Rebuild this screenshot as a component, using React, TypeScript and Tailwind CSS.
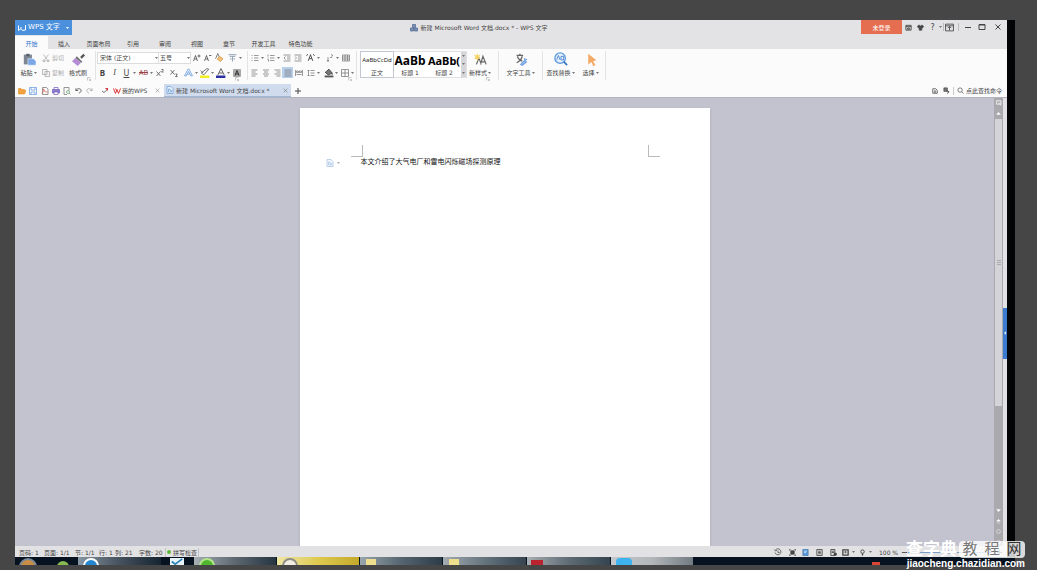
import React from "react";

type IconProps = { children: React.ReactNode; className?: string };

const Icon = ({ children, className = "h-2 w-2" }: IconProps) => (
  <svg viewBox="0 0 16 16" fill="none" stroke="currentColor" strokeWidth="1.5" className={`shrink-0 ${className}`} aria-hidden="true">
    {children}
  </svg>
);

const Caret = () => (
  <span className="flex w-[5px] shrink-0 justify-center">
    <svg viewBox="0 0 6 4" className="h-[2px] w-[3px]" aria-hidden="true">
      <path d="M0 0h6L3 4z" fill="#777" />
    </svg>
  </span>
);

type ToolProps = { label: string; caret?: boolean; active?: boolean; className?: string; children: React.ReactNode };

const Tool = ({ label, caret, active, className = "", children }: ToolProps) => (
  <button aria-label={label} className={`flex h-[13px] shrink-0 items-center ${className}`}>
    <span className={`flex h-[11px] w-[11px] items-center justify-center ${active ? "bg-[#b9d0ec]" : ""}`}>{children}</span>
    {caret && <Caret />}
  </button>
);

type BigToolProps = { label: string; caret?: boolean; className: string; children: React.ReactNode };

const BigTool = ({ label, caret, className, children }: BigToolProps) => (
  <button className={`flex shrink-0 flex-col items-center ${className}`}>
    <span className="flex h-4 items-center">{children}</span>
    <span className="flex h-[11px] items-center whitespace-nowrap">
      {label}
      {caret && <Caret />}
    </span>
  </button>
);

const Launcher = () => (
  <button aria-label="更多" className="absolute -bottom-px right-1 text-[#999]">
    <Icon className="h-1 w-1">
      <path d="M2 14V2h12M7 7l7 7M14 8v6H8" strokeWidth="2" />
    </Icon>
  </button>
);

const PageIcon = ({ className }: { className?: string }) => (
  <Icon className={className}>
    <path d="M2 1h8l4 4v10H2z" fill="#eaf2fc" stroke="#6f9fd8" />
    <path d="M5 12V6h3v3h3v3z" stroke="#6f9fd8" />
  </Icon>
);

const TitleBar = () => (
  <header className="flex h-[15px] items-start justify-between">
    <button className="flex h-[15px] w-[57px] items-center bg-[#4a90dd] pl-[3px] text-[7px] text-white">
      <Icon className="mr-[2px] h-2 w-2">
        <path d="M1 3v10l5-4 3 4 6-1V2M6 9V6" strokeWidth="2" />
      </Icon>
      WPS 文字
      <svg viewBox="0 0 6 4" className="ml-auto mr-[3px] h-[2px] w-[3px]" aria-hidden="true">
        <path d="M0 0h6L3 4z" fill="#fff" />
      </svg>
    </button>
    <h1 className="flex h-[15px] items-center gap-[3px] pl-6">
      <Icon>
        <path d="M5 1h6v6H5zM1 8h6v6H1zM9 8h6v6H9z" fill="#7b93bd" stroke="#53688f" />
      </Icon>
      新建 Microsoft Word 文档.docx * - WPS 文字
    </h1>
    <div className="flex h-[14px] items-center text-[#444]">
      <button className="mr-px h-[14px] w-[41px] bg-[#e66e50] text-white">未登录</button>
      <Tool label="消息">
        <Icon className="h-[7px] w-[7px]"><path d="M2 3h12v11H2zM2 6h12M6 9h4v3H6z" strokeWidth="2" /></Icon>
      </Tool>
      <Tool label="皮肤" className="ml-px">
        <Icon className="h-[7px] w-[7px]"><path d="M5 2 1 5l2 4 2-1v6h6V8l2 1 2-4-4-3-3 3z" fill="currentColor" /></Icon>
      </Tool>
      <Tool label="帮助" caret className="ml-px">
        <span className="text-[8px]">?</span>
      </Tool>
      <span className="h-2 w-px bg-[#bbb]" />
      <Tool label="隐藏功能区">
        <Icon className="h-[9px] w-[9px]"><path d="M1 2h14v12H1zM1 5h14M8 13V7M5 9l3-3 3 3" /></Icon>
      </Tool>
      <span className="mx-[3px] h-2 w-px bg-[#bbb]" />
      <Tool label="最小化">
        <Icon><path d="M2 9h12" strokeWidth="2" /></Icon>
      </Tool>
      <Tool label="最大化" className="ml-[3px]">
        <Icon><path d="M2 3h12v10H2zM2 4h12" strokeWidth="2" /></Icon>
      </Tool>
      <Tool label="关闭" className="ml-[5px] mr-1">
        <Icon><path d="m3 3 10 10M13 3 3 13" strokeWidth="2" /></Icon>
      </Tool>
    </div>
  </header>
);

const menus = ["插入", "页面布局", "引用", "审阅", "视图", "章节", "开发工具", "特色功能"];

const MenuTabs = () => (
  <nav className="flex h-[14px] items-end">
    <button className="h-[13px] w-[33px] bg-[#fbfbfc] pt-px text-[#2f78cc]">开始</button>
    {menus.map((name) => (
      <button key={name} className={`h-[13px] pt-px ${name.length > 2 ? "w-[37px]" : "w-8"}`}>
        {name}
      </button>
    ))}
  </nav>
);

const Clipboard = () => (
  <div className="relative flex w-[75px] shrink-0">
    <BigTool label="粘贴" caret className="mr-1 w-[18px]">
      <Icon className="h-[13px] w-[13px]">
        <path d="M1 2h10v12H1z" fill="#7d8794" stroke="none" />
        <path d="M4 1h4v3H4z" fill="#555f6c" stroke="none" />
        <path d="M6 7h7l3 3v5H6z" fill="#7aa7e6" stroke="#fff" strokeWidth=".6" />
      </Icon>
    </BigTool>
    <div className="flex w-6 flex-col gap-[2px] text-[#aaa]">
      <button className="flex h-[13px] items-center gap-[2px] whitespace-nowrap">
        <Icon><path d="m3 1 7 10M13 1 6 11M2 12h4v3H2zM10 12h4v3h-4z" /></Icon>
        剪切
      </button>
      <button className="flex h-[13px] items-center gap-[2px] whitespace-nowrap">
        <Icon><path d="M1 1h9v10H1zM6 5h9v10H6z" fill="#f4f4f4" /></Icon>
        复制
      </button>
    </div>
    <BigTool label="格式刷" className="w-6">
      <Icon className="h-[13px] w-[13px]">
        <path d="m10 5 4-4 2 2-4 4z" fill="#555" stroke="none" />
        <path d="m6 4 7 7-2 1-7-6z" fill="#777" stroke="none" />
        <path d="m4 6 7 6-4 4-7-6z" fill="#b58bd6" stroke="none" />
      </Icon>
    </BigTool>
    <Launcher />
  </div>
);

const FontGroup = () => (
  <div className="relative flex w-[148px] shrink-0 flex-col gap-[2px] border-l border-[#e4e4e6] pl-px">
    <div className="flex h-[13px] items-center">
      <div className="relative">
        <select aria-label="字体" className="block h-3 w-[62px] appearance-none border border-[#dcdcdf] bg-white pl-[2px]">
          <option>宋体 (正文)</option>
        </select>
        <span className="pointer-events-none absolute right-0 top-[5px] flex"><Caret /></span>
      </div>
      <div className="relative">
        <select aria-label="字号" className="block h-3 w-8 appearance-none border border-l-0 border-[#dcdcdf] bg-white pl-px">
          <option>五号</option>
        </select>
        <span className="pointer-events-none absolute right-0 top-[5px] flex"><Caret /></span>
      </div>
      <Tool label="增大字号">
        <Icon><path d="m1 14 4-11 4 11M3 10h5M12 1v6M9 4h6" /></Icon>
      </Tool>
      <Tool label="减小字号">
        <Icon><path d="m1 14 4-11 4 11M3 10h5M10 3h5" /></Icon>
      </Tool>
      <Tool label="清除格式" className="ml-px">
        <Icon className="h-[9px] w-[9px]">
          <path d="m1 10 4-9 3 7" stroke="#666" />
          <path d="m8 6 6 4-4 5-6-4z" fill="#f0c27a" stroke="#d69a4a" />
        </Icon>
      </Tool>
      <Tool label="拼音指南" caret className="ml-[2px]">
        <Icon className="h-[9px] w-[9px]"><path d="M1 3h14M3 6h10M8 6v9M5 9v3M11 9v3" stroke="#8492a8" /></Icon>
      </Tool>
    </div>
    <div className="flex h-[13px] items-center font-['Noto_Sans',sans-serif] text-[8px]">
      <Tool label="加粗"><b>B</b></Tool>
      <Tool label="倾斜" className="ml-px"><i className="font-['Liberation_Serif',serif]">I</i></Tool>
      <Tool label="下划线" caret className="ml-px"><u>U</u></Tool>
      <Tool label="删除线" caret className="ml-px"><s className="text-[7px] text-[#944]">AB</s></Tool>
      <Tool label="上标">
        <Icon><path d="m1 5 8 9M9 5l-8 9M11 1h3v2l-3 3h4" /></Icon>
      </Tool>
      <Tool label="下标" className="ml-[3px]">
        <Icon><path d="m1 2 8 9M9 2l-8 9M11 10h3v2l-3 3h4" /></Icon>
      </Tool>
      <Tool label="文字效果" caret className="ml-1">
        <Icon className="h-[9px] w-[9px]"><path d="M1 14 7 2h2l6 12h-3l-4-8-4 8zM6 11h4" stroke="#6c9fdf" /></Icon>
      </Tool>
      <Tool label="突出显示" caret>
        <Icon className="h-[10px] w-[10px]">
          <path d="m2 8 4 3 8-9-3-1zM1 4l4 4" stroke="#666" />
          <path d="M0 12h15v4H0z" fill="#f3ee20" stroke="none" />
        </Icon>
      </Tool>
      <Tool label="字体颜色" caret>
        <Icon className="h-[10px] w-[10px]">
          <path d="m3 11 5-10 5 10M5 8h6" stroke="#555" />
          <path d="M0 12h15v4H0z" fill="#2a30a0" stroke="none" />
        </Icon>
      </Tool>
      <Tool label="字符底纹">
        <Icon>
          <path d="M1 1h14v14H1z" fill="#aaa" stroke="#999" />
          <path d="m4 13 4-10 4 10M6 10h5" stroke="#333" strokeWidth="2" />
        </Icon>
      </Tool>
    </div>
    <Launcher />
  </div>
);

const ParagraphGroup = () => (
  <div className="relative ml-1 flex w-[109px] shrink-0 flex-col gap-[2px] border-l border-[#e4e4e6] pl-px text-[#777]">
    <div className="flex h-[13px] items-center">
      <Tool label="项目符号" caret>
        <Icon><path d="M1 3h2M1 8h2M1 13h2M6 3h9M6 8h9M6 13h9" /></Icon>
      </Tool>
      <Tool label="编号" caret>
        <Icon><path d="M2 1v4M1 8h2M1 11h2v4M6 3h9M6 8h9M6 13h9" /></Icon>
      </Tool>
      <Tool label="减少缩进">
        <Icon><path d="M1 2h14M8 6h7M8 10h7M1 14h14M5 5 2 8l3 3" /></Icon>
      </Tool>
      <Tool label="增加缩进">
        <Icon><path d="M1 2h14M8 6h7M8 10h7M1 14h14M2 5l3 3-3 3" /></Icon>
      </Tool>
      <Tool label="中文版式" caret className="ml-[2px]">
        <Icon className="h-[9px] w-[9px]"><path d="m4 14 4-11 4 11M6 10h4M1 5l2-3M15 5l-2-3" stroke="#333" /></Icon>
      </Tool>
      <Tool label="排序" caret className="ml-[3px]">
        <Icon><path d="M4 15V6M2 12l2 3 2-3M8 7h4M10 1l4 2-3 2" /></Icon>
      </Tool>
      <Tool label="制表位">
        <Icon><path d="M1 2h14v12H1zM1 6h14M1 10h14M6 2v12M11 2v12" /></Icon>
      </Tool>
    </div>
    <div className="flex h-[13px] items-center">
      <Tool label="左对齐"><Icon><path d="M1 2h12M1 6h8M1 10h12M1 14h8" /></Icon></Tool>
      <Tool label="居中"><Icon><path d="M2 2h12M4 6h8M2 10h12M4 14h8" /></Icon></Tool>
      <Tool label="右对齐"><Icon><path d="M3 2h12M7 6h8M3 10h12M7 14h8" /></Icon></Tool>
      <Tool label="两端对齐" active><Icon><path d="M1 2h14M1 6h14M1 10h14M1 14h14" /></Icon></Tool>
      <Tool label="分散对齐"><Icon><path d="M1 2v12M15 2v12M3 4h4v3H3zM9 4h4v3H9zM3 11h10" /></Icon></Tool>
      <Tool label="行距" caret className="ml-px">
        <Icon><path d="M3 2v12M1 4l2-2 2 2M1 12l2 2 2-2M7 3h8M7 8h8M7 13h8" /></Icon>
      </Tool>
      <Tool label="底纹" caret className="ml-[2px]">
        <Icon className="h-[10px] w-[10px]">
          <path d="m2 7 6-5 5 6-6 3zM13 8v3" fill="#777" stroke="#444" />
          <path d="M1 12h14v3H1z" fill="#555" stroke="none" />
        </Icon>
      </Tool>
      <Tool label="边框" caret>
        <Icon><path d="M1 1h14v14H1zM8 1v14M1 8h14" /></Icon>
      </Tool>
    </div>
    <Launcher />
  </div>
);

const StylesGroup = () => (
  <div className="relative flex w-[138px] shrink-0 border-l border-[#e4e4e6] pl-[3px]">
    <div className="flex h-[27px] w-[108px] border border-[#e0e0e3] bg-white">
      <button className="flex w-8 shrink-0 flex-col items-center outline outline-[#c3c7d2]">
        <span className="flex h-4 items-center whitespace-nowrap font-['Noto_Sans',sans-serif] text-[#222]">AaBbCcDd</span>
        <span className="flex h-[9px] items-center">正文</span>
      </button>
      <button className="flex w-[34px] shrink-0 flex-col items-center">
        <span className="flex h-4 items-center font-['Noto_Sans',sans-serif] text-[12px] font-bold text-black">AaBb</span>
        <span className="flex h-[9px] items-center">标题 1</span>
      </button>
      <button className="flex w-[34px] shrink-0 flex-col items-center">
        <span className="flex h-4 items-center font-['Noto_Sans',sans-serif] text-[11px] font-bold text-black">AaBb(</span>
        <span className="flex h-[9px] items-center">标题 2</span>
      </button>
      <div className="flex flex-1 flex-col justify-around bg-[#d6d6da]">
        <button aria-label="上一行" className="flex justify-center"><Caret /></button>
        <button aria-label="下一行" className="flex justify-center"><Caret /></button>
        <button aria-label="展开样式" className="flex justify-center"><Caret /></button>
      </div>
    </div>
    <BigTool label="新样式" caret className="w-[27px]">
      <Icon className="h-[13px] w-[13px]">
        <path d="m3 14 3-8 3 8M8 14l3-10 4 10M9 11h5" stroke="#666" />
        <path d="m4 0 1 3 3-1-2 3 2 2-3 0-1 3-1-3-3 0 2-2-2-3 3 1z" fill="#f5d35e" stroke="none" />
      </Icon>
    </BigTool>
    <Launcher />
  </div>
);

const Ribbon = () => (
  <section className="flex h-[35px] bg-[#fbfbfc] pb-1 pl-[5px] pt-[2px]">
    <Clipboard />
    <FontGroup />
    <ParagraphGroup />
    <StylesGroup />
    <div className="ml-1 flex w-11 shrink-0 border-l border-[#e4e4e6] pl-[3px]">
      <BigTool label="文字工具" caret className="w-[38px]">
        <Icon className="h-[13px] w-[13px]">
          <path d="M2 3h8M6 1v2M3 4c1 4 3 5 6 6M9 4c-1 4-3 6-7 8" stroke="#666" />
          <path d="m7 14 5-5 2 2-5 4zM12 6v3M15 8h-2" fill="#aac8f0" stroke="#6f9fe0" />
        </Icon>
      </BigTool>
    </div>
    <div className="flex w-16 shrink-0 border-x border-[#e4e4e6]">
      <BigTool label="查找替换" caret className="w-[36px]">
        <Icon className="h-[14px] w-[14px]">
          <circle cx="7" cy="7" r="6" stroke="#5d9ae0" fill="#e5f0fc" />
          <path d="m11 11 4 4" stroke="#3c79c4" strokeWidth="2" />
          <path d="m3 9 2-5 2 5M8 5h3v4H8z" stroke="#4784cf" strokeWidth="1" />
        </Icon>
      </BigTool>
      <BigTool label="选择" caret className="w-[24px]">
        <Icon className="h-[13px] w-[13px]">
          <path d="m4 1 10 8-4 1 3 5-3 1-2-5-4 3z" fill="#f2aa66" stroke="none" />
        </Icon>
      </BigTool>
    </div>
  </section>
);

const DocumentBar = () => (
  <div className="flex h-[13px] items-center bg-[#fbfbfc]">
    <Tool label="打开" className="ml-px">
      <Icon><path d="M1 3h5l2 2h5v2h3l-3 7H1z" fill="#f2a23c" stroke="#dd8419" strokeWidth="1" /></Icon>
    </Tool>
    <Tool label="保存">
      <Icon><path d="M1 1h14v14H1zM4 1v5h8V1M4 15v-5h8v5" stroke="#6a9fe0" /></Icon>
    </Tool>
    <Tool label="输出为PDF" className="ml-px">
      <Icon>
        <path d="M3 1h8l3 3v11H3z" stroke="#777" />
        <path d="M1 12c6-1 6-8 4-8s2 7 8 6" stroke="#d35843" />
      </Icon>
    </Tool>
    <Tool label="打印">
      <Icon>
        <path d="M1 5h14v7H1z" fill="#8c7bd0" stroke="#7563bd" />
        <path d="M4 1h8v4H4zM4 10h8v5H4z" fill="#fff" stroke="#7563bd" />
      </Icon>
    </Tool>
    <Tool label="打印预览">
      <Icon><path d="M8 15H2V1h10v6" stroke="#777" /><circle cx="10" cy="10" r="3" stroke="#6d9d6d" /><path d="m12 12 3 3" stroke="#6d9d6d" /></Icon>
    </Tool>
    <Tool label="撤销" className="ml-px">
      <Icon className="h-[7px] w-[7px]"><path d="M2 3v5h5M2 8c4-6 12-5 12 0 0 3-2 5-5 6" stroke="#555" strokeWidth="2" /></Icon>
    </Tool>
    <Tool label="恢复">
      <Icon className="h-[7px] w-[7px]"><path d="M14 3v5H9M14 8C10 2 2 3 2 8c0 3 2 5 5 6" stroke="#999" /></Icon>
    </Tool>
    <Tool label="快速访问" className="ml-1 mr-[2px]">
      <Icon><path d="m2 8 4 3 8-7" stroke="#777" strokeWidth="2" /><path d="M8 2h6v6z" fill="#d8303c" stroke="none" /></Icon>
    </Tool>
    <div className="flex h-[13px] w-[52px] items-center pl-px">
      <Icon className="mr-px h-2 w-2">
        <path d="m1 3 4 10 3-8 3 8 4-10M5 3l3 6" stroke="#dc3b3b" strokeWidth="2" />
      </Icon>
      <a href="#" className="whitespace-nowrap">我的WPS</a>
      <button aria-label="关闭我的WPS" className="ml-auto mr-1 text-[#888]">
        <Icon className="h-[5px] w-[5px]"><path d="m2 2 12 12M14 2 2 14" strokeWidth="2" /></Icon>
      </button>
    </div>
    <div className="flex h-[13px] w-[127px] items-center border-b border-[#9db8dd] bg-[#d0dcee] pl-[2px]">
      <PageIcon className="mr-[2px] h-2 w-2" />
      <a href="#" className="whitespace-nowrap">新建 Microsoft Word 文档.docx *</a>
      <button aria-label="关闭文档" className="ml-auto mr-[3px] text-[#777]">
        <Icon className="h-[5px] w-[5px]"><path d="m2 2 12 12M14 2 2 14" strokeWidth="2" /></Icon>
      </button>
    </div>
    <Tool label="新建" className="ml-px">
      <Icon><path d="M8 2v12M2 8h12" strokeWidth="2" /></Icon>
    </Tool>
    <div className="ml-auto flex items-center">
      <Tool label="反馈">
        <Icon className="h-[6px] w-[6px]"><path d="M2 2h8l4 4v8H2zM5 8h6M5 11h6" strokeWidth="2" /></Icon>
      </Tool>
      <Tool label="共享" className="ml-px">
        <Icon className="h-[7px] w-[7px]"><path d="M2 2h8v8H2z" fill="#777" /><path d="m8 8 6 3-5 4" strokeWidth="2" /></Icon>
      </Tool>
      <span className="mx-px h-2 w-px bg-[#ccc]" />
      <label htmlFor="command" aria-label="查找命令" className="flex w-[11px] justify-center">
        <Icon className="h-[7px] w-[7px]"><circle cx="7" cy="7" r="5" /><path d="m11 11 4 4" /></Icon>
      </label>
      <input id="command" placeholder="点此查找命令" className="h-[11px] w-[41px] bg-transparent outline-none placeholder:text-[#444]" />
    </div>
  </div>
);

const Workspace = () => (
  <main className="flex min-h-0 flex-1 border-t border-[#b3b3bd] bg-[#c3c3cf]">
    <div className="flex min-w-0 flex-1 justify-center pt-[10px]">
      <article className="w-[410px] bg-white px-[26px] pt-[37px] shadow">
        <div className="flex justify-between pl-[25px] pr-6">
          <span className="h-3 w-3 border-b border-r border-[#bbb]" />
          <span className="h-3 w-3 border-b border-l border-[#bbb]" />
        </div>
        <div className="flex h-[11px] items-center">
          <button aria-label="文档选项" className="flex w-[35px] items-center gap-[2px] opacity-60">
            <PageIcon className="h-2 w-2" />
            <Caret />
          </button>
          <p className="text-[7px] text-[#111]">本文介绍了大气电厂和雷电闪烁磁场探测原理</p>
        </div>
      </article>
    </div>
    <div className="flex w-[9px] flex-col items-center bg-[#aaaaae] text-white">
      <button aria-label="显示标尺" className="flex h-[10px] items-center">
        <Icon className="h-[6px] w-[6px]"><path d="M1 2h12v9H1zM6 7l8 7" strokeWidth="2" /></Icon>
      </button>
      <button aria-label="向上滚动" className="flex h-[11px] items-center">
        <Icon className="h-[5px] w-[5px]"><path d="m2 11 6-7 6 7z" fill="currentColor" /></Icon>
      </button>
      <div className="flex min-h-0 w-full flex-1 flex-col">
        <div className="mx-px flex h-3/4 flex-col items-center justify-center gap-px bg-[#d4d4d8]">
          <span className="h-px w-1 bg-[#aaa]" />
          <span className="h-px w-1 bg-[#aaa]" />
          <span className="h-px w-1 bg-[#aaa]" />
        </div>
      </div>
      <div className="flex h-11 flex-col items-center justify-between pb-px pt-[6px]">
        <button aria-label="向下滚动"><Icon className="block h-[5px] w-[5px]"><path d="m2 5 6 7 6-7z" fill="currentColor" /></Icon></button>
        <button aria-label="上一页"><Icon className="block h-[5px] w-[5px]"><path d="m2 7 6-6 6 6zM3 13h10" fill="currentColor" /></Icon></button>
        <button aria-label="选择浏览对象"><Icon className="block h-[5px] w-[5px]"><circle cx="8" cy="8" r="6" /></Icon></button>
        <button aria-label="下一页"><Icon className="block h-[5px] w-[5px]"><path d="m2 9 6 6 6-6zM3 3h10" fill="currentColor" /></Icon></button>
      </div>
    </div>
    <div className="flex w-1 flex-col justify-center bg-[#e2e2e6] pt-[22px]">
      <button aria-label="展开任务窗格" className="flex h-[51px] items-center bg-[#3c7bcd] text-white">
        <Icon className="h-1 w-1"><path d="m11 3-6 5 6 5z" fill="currentColor" /></Icon>
      </button>
    </div>
  </main>
);

const StatusBar = () => (
  <footer className="flex h-[11px] items-center bg-[#e2e2e4] pl-1 pt-px">
    <span className="w-[25px]">页码: 1</span>
    <span className="w-[31px]">页面: 1/1</span>
    <span className="w-6">节: 1/1</span>
    <span className="w-4">行: 1</span>
    <span className="w-6">列: 21</span>
    <span className="w-[26px]">字数: 20</span>
    <button className="flex items-center gap-[2px] border-x border-[#c5c5c8] px-px">
      <span className="h-1 w-1 rounded-full bg-[#5db53c]" />
      拼写检查
    </button>
    <div className="ml-auto flex items-center">
      <Tool label="历史版本">
        <Icon><path d="M3 4a6 6 0 1 1-1 5M1 3l2 3 3-1M8 5v4h3" /></Icon>
      </Tool>
      <Tool label="全屏显示" className="ml-1">
        <Icon className="h-[7px] w-[7px]"><path d="M1 4V1h3M12 1h3v3M15 12v3h-3M4 15H1v-3" /><path d="M4 4h8v8H4z" fill="currentColor" /></Icon>
      </Tool>
      <Tool label="页面视图" className="ml-[2px]">
        <Icon className="h-[7px] w-[7px]"><path d="M2 1h12v14H2z" fill="#5b9bdc" stroke="#376fa7" /><path d="M5 5h6M5 8h4" stroke="#fff" /></Icon>
      </Tool>
      <Tool label="大纲视图" className="ml-[3px]">
        <Icon className="h-[7px] w-[7px]"><path d="M2 1h12v14H2zM5 5h6M5 8h6M5 11h6" strokeWidth="2" /></Icon>
      </Tool>
      <Tool label="Web版式" className="ml-[3px]">
        <Icon className="h-[7px] w-[7px]"><path d="M2 1h9v14H2zM4 5h5M4 8h5" strokeWidth="2" /><circle cx="12" cy="12" r="3" fill="currentColor" /></Icon>
      </Tool>
      <Tool label="护眼模式" caret className="ml-px">
        <Icon className="h-[7px] w-[7px]"><path d="M2 2h12v12H2z" strokeWidth="3" /><path d="M8 4v6M5 7h6" /></Icon>
      </Tool>
      <Tool label="定位" caret className="ml-px">
        <Icon className="h-[7px] w-[7px]"><circle cx="8" cy="6" r="4" strokeWidth="2" /><path d="M8 10v5" strokeWidth="3" /></Icon>
      </Tool>
      <button className="ml-[6px] w-[22px] whitespace-nowrap text-left">100 %</button>
      <button aria-label="缩小" className="flex w-[7px]"><Icon className="h-[7px] w-[7px]"><path d="M2 8h12" strokeWidth="2" /></Icon></button>
      <input
        aria-label="显示比例"
        type="range"
        className="h-px w-[84px] appearance-none bg-[#7c9cc8] [&::-webkit-slider-thumb]:h-1 [&::-webkit-slider-thumb]:w-1 [&::-webkit-slider-thumb]:appearance-none [&::-webkit-slider-thumb]:bg-[#9aa9bd]"
      />
      <button aria-label="放大" className="mx-1 flex w-[7px]"><Icon className="h-[7px] w-[7px]"><path d="M2 8h12M8 2v12" strokeWidth="2" /></Icon></button>
    </div>
  </footer>
);

// each button carries its own icon, cut off by the bottom of the bar
const Taskbar = () => (
  <div className="flex h-2 gap-px overflow-hidden bg-[#06121f]">
    <button aria-label="开始菜单" className="w-[33px] pl-1 pt-px">
      <span className="block h-[18px] w-[18px] rounded-full border-2 border-[#77879a] bg-[#c98e45]" />
    </button>
    <button aria-label="浏览器" className="w-[28px] pl-2 pt-1">
      <span className="block h-3 w-3 rounded-full bg-[#87b950]" />
    </button>
    <button aria-label="QQ浏览器" className="w-[83px] bg-linear-to-r from-[#8797a4] via-[#46525d] to-[#172532] pl-[5px] pt-px">
      <span className="block h-4 w-4 rounded-full border-2 border-white bg-[#2386cf]" />
    </button>
    <button aria-label="图表" className="w-[31px] pl-[7px] pt-px">
      <svg viewBox="0 0 16 8" className="h-[7px] w-4" aria-hidden="true">
        <path d="M0 0h16v8H0z" fill="#e8f4fb" />
        <path d="m2 4 4 3 8-6" stroke="#2b82b5" strokeWidth="2" fill="none" />
      </svg>
    </button>
    <button aria-label="安全卫士" className="w-[82px] bg-linear-to-r from-[#a7afb4] via-[#5d6871] to-[#263541] pl-[5px] pt-px">
      <span className="block h-4 w-4 rounded-full border-2 border-[#b3e58c] bg-[#4fb62e]" />
    </button>
    <button aria-label="搜狗" className="w-[82px] bg-linear-to-r from-[#efe6a4] via-[#ddca4e] to-[#c4a92b] pl-[5px] pt-px">
      <span className="block h-4 w-4 rounded-full border-2 border-[#8e8e88] bg-[#f1eee1]" />
    </button>
    <button aria-label="文件夹" className="w-[82px] bg-linear-to-r from-[#9aa6ad] via-[#566570] to-[#2d3d48] pl-[6px] pt-[2px]">
      <span className="block h-3 w-[10px] bg-[#eedf8e]" />
    </button>
    <button aria-label="文档文件夹" className="w-[83px] bg-linear-to-r from-[#a3acb1] via-[#66747e] to-[#35444f] pl-[6px] pt-[2px]">
      <span className="block h-3 w-[10px] bg-[#eedf8e]" />
    </button>
    <button aria-label="PDF" className="w-[83px] bg-linear-to-r from-[#a9afb2] via-[#5f6c75] to-[#35444f] pl-1 pt-[3px]">
      <span className="block h-3 w-3 bg-[#b8232d]" />
    </button>
    <button aria-label="聊天" className="w-[82px] bg-linear-to-r from-[#c4c8ca] via-[#b3b7b9] to-[#727b82] pl-[5px] pt-px">
      <span className="block h-4 w-4 rounded bg-[#3fb3ef]" />
    </button>
    <span className="ml-auto mr-[135px] mt-[5px] h-1 w-2 bg-[#dc4436]" />
  </div>
);

const Watermark = () => (
  <div className="pointer-events-none absolute bottom-px right-3 w-[119px] text-white">
    <div className="flex h-[18px] items-center justify-between">
      <span className="text-[17px] leading-[18px] font-bold">查字典</span>
      <span className="flex h-[17px] w-[66px] items-center justify-around rounded-sm bg-white/80 text-[15px] leading-[17px] text-[#777]">
        <span>教</span>
        <span>程</span>
        <span className="text-[#333]">网</span>
      </span>
    </div>
    <div className="h-[11px] whitespace-nowrap text-right font-['Liberation_Sans'] text-[10px] leading-[11px] font-bold">jiaocheng.chazidian.com</div>
  </div>
);

const App = () => {
  return (
    <div className="relative flex h-screen flex-col overflow-hidden bg-[#464646] pb-[5px] pl-[15px] pr-[22px] pt-5 font-['DejaVu_Sans','Noto_Sans_CJK_SC',sans-serif] text-[6px] leading-[9px] text-[#444]">
      <div className="flex min-h-0 flex-1 bg-[#020406]">
        <div className="flex min-w-0 flex-1 flex-col bg-[#e3e3e5]">
          <TitleBar />
          <MenuTabs />
          <Ribbon />
          <DocumentBar />
          <Workspace />
          <StatusBar />
        </div>
        <div className="w-2" />
      </div>
      <Taskbar />
      <Watermark />
    </div>
  );
};

export default App;
